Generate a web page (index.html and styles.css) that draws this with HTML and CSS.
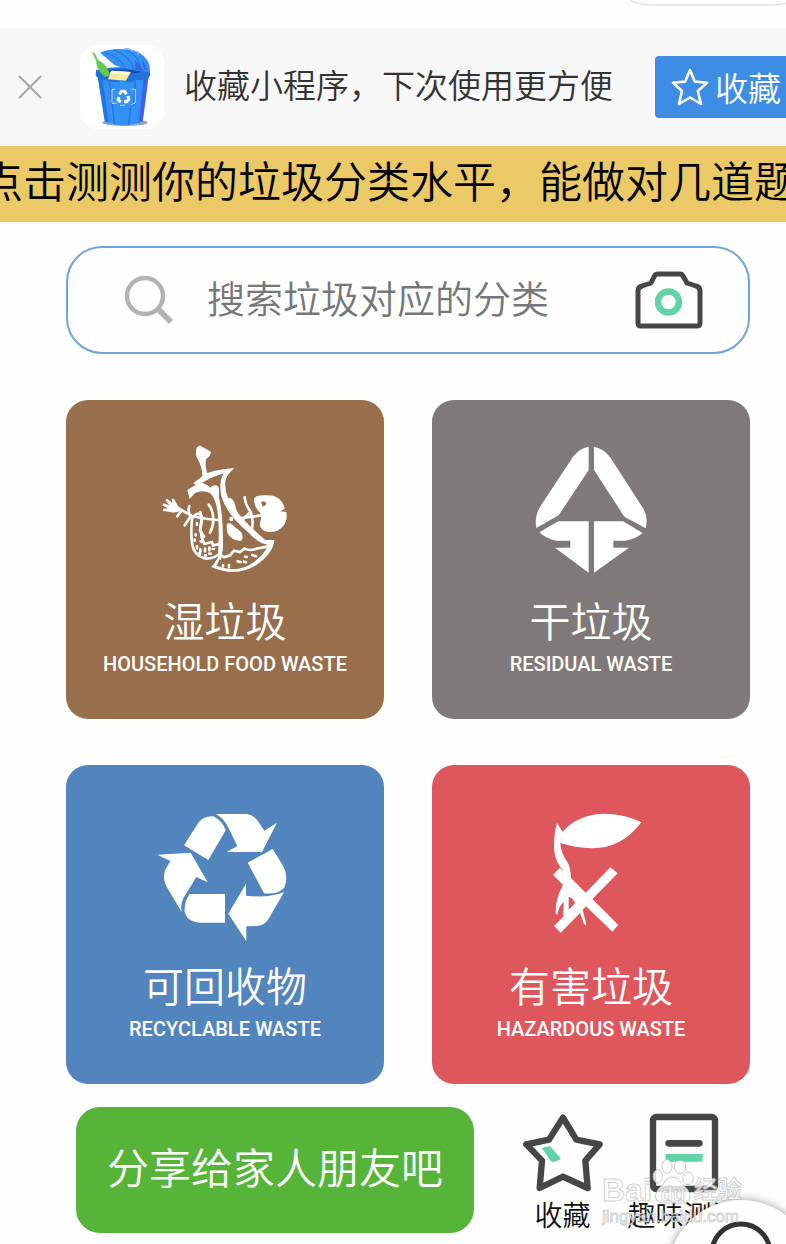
FILE: index.html
```html
<!DOCTYPE html>
<html lang="zh-CN">
<head>
<meta charset="utf-8">
<meta name="viewport" content="width=device-width, initial-scale=1">
<title>垃圾分类</title>
<link rel="stylesheet" href="styles.css">
</head>
<body>
<div class="page">
  <header class="topbar"><div class="capsule"></div></header>

  <section class="tip">
    <button class="tip-close" type="button" aria-label="关闭">
      <svg width="26" height="26" viewBox="0 0 26 26"><path d="M2 2L24 24M24 2L2 24" stroke="#a9a9a9" stroke-width="2.4" fill="none"/></svg>
    </button>
    <div class="app-icon">
      <svg width="84" height="84" viewBox="30 17 252 252">
        <ellipse cx="165" cy="250" rx="68" ry="10" fill="#8fa3c4"/>
        <path d="M82 108L104 246Q160 270 218 246L236 108Z" fill="#3590f5"/>
        <path d="M222 110L206 251L218 246L236 108Z" fill="#3b62ea"/>
        <path d="M84 114L105 246L116 250L98 120Z" fill="#2277dc"/>
        <path d="M118 126L134 255M182 205L176 257M196 120L190 200" stroke="#2274d9" stroke-width="4" fill="none"/>
        <path d="M78 92Q160 74 240 92L240 110Q226 124 200 122Q180 134 156 124Q130 134 108 122Q84 122 77 108Z" fill="#2272db"/>
        <path d="M92 96Q160 84 226 96Q160 112 92 96Z" fill="#194fa8"/>
        <path d="M90 40Q120 26 168 30Q216 34 234 66Q242 84 238 98Q190 98 134 78Q112 58 90 40Z" fill="#3391f4"/>
        <path d="M104 40Q146 50 166 86M130 32Q180 46 192 92M172 32Q208 52 214 94" stroke="#2270d2" stroke-width="3" fill="none"/>
        <path d="M196 62L222 96L196 92ZM216 60L234 92L222 90Z" fill="#3266e5"/>
        <path d="M162 30Q174 24 186 34L204 38L204 48" stroke="#6db7f9" stroke-width="4" fill="none"/>
        <path d="M66 38L74 42L84 62Q106 72 116 94L120 108L106 113Q90 102 82 84Q78 76 79 66Z" fill="#66c94b"/>
        <path d="M124 94L182 98L168 124L114 120Z" fill="#f5e9a0"/>
        <path d="M124 94L182 98L177 107L120 103Z" fill="#fff9cf"/>
        <path d="M136 150H126V192H140M184 150H196V190L184 195M150 198H166" stroke="#b6dcff" stroke-width="3" fill="none"/>
        <g fill="none" stroke="#fff" stroke-width="9"><path d="M148 165L155 156H164L169 165M174 170L176 181L170 187H162M153 188L144 182L147 173"/></g>
      </svg>
    </div>
    <p class="tip-text">收藏小程序，下次使用更方便</p>
    <button class="tip-fav" type="button">
      <svg width="40" height="40" viewBox="0 0 40 40"><path d="M20 3L24.8 14.6L37 15.8L27.8 24L31 37L20 30.5L9 37L12 24L3 15.8L15.2 14.6Z" fill="none" stroke="#fff" stroke-width="2.6" stroke-linejoin="round"/></svg>
      <span>收藏</span>
    </button>
  </section>

  <a class="banner" href="#quiz">点击测测你的垃圾分类水平，能做对几道题</a>

  <main class="content">
    <form class="search">
      <svg class="search-icon" width="50" height="50" viewBox="0 0 50 50"><circle cx="21" cy="21" r="18" fill="none" stroke="#b3b3b3" stroke-width="4.5"/><path d="M34 34L47 47" stroke="#b3b3b3" stroke-width="6"/></svg>
      <input class="search-input" type="search" placeholder="搜索垃圾对应的分类" aria-label="搜索垃圾对应的分类">
      <button class="camera" type="button" aria-label="拍照识别">
        <svg width="68" height="60" viewBox="0 0 68 60"><path d="M3 21Q3 17 7 16L16 13L20 5Q21 4 23 4H45Q47 4 48 6L52 13L61 16Q65 17 65 21V53Q65 56 62 56H6Q3 56 3 53Z" fill="none" stroke="#464646" stroke-width="5" stroke-linejoin="round"/><circle cx="33.500" cy="32" r="10.500" fill="none" stroke="#63d3a6" stroke-width="6.500"/></svg>
      </button>
    </form>

    <nav class="cards">
      <a class="card card-wet" href="#wet">
        <svg class="card-icon" viewBox="0 0 450 480">
          <g fill="#fff">
            <path d="M157 138Q158 112 140 82Q132 50 150 47Q165 54 183 66Q179 82 168 88Q164 112 174 134Z"/>
            <path d="M130 159Q151 145 164 133Q195 118 253 114Q230 134 226 154Q222 196 256 238Q282 276 346 330L373 330Q370 370 318 406Q258 444 184 411Q196 399 201 386L210 386L200 407Q262 431 306 400Q342 376 355 344Q326 342 296 308Q230 254 214 198Q206 158 220 131Q190 136 140 168Z"/>
            <path d="M112 180L152 156Q194 172 208 206Q220 262 219 354L213 390L203 388Q208 330 205 270Q202 212 181 190Q158 178 135 189L119 207Z"/>
            <path d="M184 169Q204 160 207 177V204Q194 196 184 176Z"/>
            <path d="M236 203Q250 205 254 220L262 250Q240 232 236 203Z"/>
            <path d="M230 285Q234 274 244 282L273 306Q283 320 273 333Q242 332 231 306Z"/>
            <ellipse cx="244" cy="267" rx="6" ry="7"/>
            <path fill-rule="evenodd" d="M312 206C320 192 350 196 370 197C390 204 402 218 404 237L390 244L409 246C414 276 400 292 382 302C360 310 336 306 330 288C326 274 340 264 330 248C320 238 312 226 312 206ZM333 216L338 230L347 226L349 218L342 214Z"/>
            <path d="M92 240Q78 252 58 245L39 243L40 236L54 235L37 226L40 220L58 226L46 210L52 206L67 220L65 206L72 207L82 224Z"/>
          </g>
          <g fill="none" stroke="#fff" stroke-width="8" stroke-linecap="round">
            <path d="M78 231L126 258Q170 268 206 270M270 265Q305 260 335 256"/>
            <path d="M118 228Q112 246 122 259L104 286M94 242L82 259M176 224Q190 242 190 270Q190 290 180 308M151 246Q158 270 150 300L162 320"/>
            <path d="M284 202Q286 224 302 246L272 274M302 246Q312 272 305 300"/>
            <path d="M126 268Q122 300 126 340Q132 378 168 386Q196 386 212 368"/>
            <path d="M126 265Q146 238 157 264L151 292L155 322L163 342L186 336L189 346L208 342"/>
            <path d="M212 375L222 382L240 376L252 362L270 366L284 356Q300 364 318 356L350 350L365 334"/>
            <path d="M141 279V285M137 313V316M134 329V332M156 336L152 334M141 349V355M151 358V365M165 356V364M178 353V361M188 357H192M165 376H168M178 371H182M147 370L150 372M219 405V409M237 405V412M263 394L272 396M286 380L290 381M282 395L288 397M307 375L318 379"/>
          </g>
        </svg>
        <span class="card-title">湿垃圾</span>
        <span class="card-sub">HOUSEHOLD FOOD WASTE</span>
      </a>
      <a class="card card-dry" href="#dry">
        <svg class="card-icon" viewBox="-12 0 450 480">
          <path fill="#fff" d="M206 50V120L116 256L49 294Q43 263 58 234L158 82Q178 54 206 50ZM222 50Q252 56 272 84L371 238Q385 262 377 295L313 260L222 120ZM115 274H206V428L105 353H151V332H108Q77 326 58 307ZM222 274H309L368 309Q346 328 315 332H280V353H327L222 428Z"/>
        </svg>
        <span class="card-title">干垃圾</span>
        <span class="card-sub">RESIDUAL WASTE</span>
      </a>
      <a class="card card-recycle" href="#recycle">
        <svg class="card-icon" viewBox="0 -12 450 480">
          <path fill="#fff" d="M102 139L146 70Q162 50 190 52Q218 66 227 94L175 183ZM198 45H292Q314 50 326 70L343 95L381 71L336 159H230L262 141L234 84Q222 58 198 45ZM293 191L368 150L400 202Q416 234 403 266Q384 287 342 283ZM402 280L354 362Q342 380 320 381L289 382V427L235 344L288 254V290Q355 298 402 280ZM119 285H225V371H150Q112 369 104 340Q101 310 119 285ZM22 167L122 161L173 250L139 234L101 296Q90 314 95 339L54 270Q36 244 45 214L61 186Z"/>
        </svg>
        <span class="card-title">可回收物</span>
        <span class="card-sub">RECYCLABLE WASTE</span>
      </a>
      <a class="card card-harm" href="#harm">
        <svg class="card-icon" viewBox="-12 -12 450 480">
          <path fill="#fff" d="M111 72L128 98Q174 45 255 44Q320 46 364 70Q306 148 216 148Q163 146 121 132Q122 162 143 190Q152 208 153 237L197 281L271 205L293 223L217 300L295 378L277 398L198 322L188 332L199 375Q196 381 192 374L180 342L122 401L102 381L130 353L131 309Q118 319 112 347L107 344Q105 300 129 258L99 227L119 207L133 218Q103 190 102 145Q102 102 111 72ZM146 294V332L165 313Q158 294 146 294Z"/>
        </svg>
        <span class="card-title">有害垃圾</span>
        <span class="card-sub">HAZARDOUS WASTE</span>
      </a>
    </nav>

    <footer class="actions">
      <button class="share" type="button">分享给家人朋友吧</button>
      <a class="action" href="#favorites">
        <svg width="80" height="80" viewBox="0 0 240 240"><path d="M120 14L160 80L230 94L187 143L194 225L120 191L50 225L57 143L10 94L78 80Z" fill="none" stroke="#464646" stroke-width="19" stroke-linejoin="round"/><path d="M57 106Q62 101 82 100L114 138L92 148L83 144Z" fill="#5fd3a5"/></svg>
        <span>收藏</span>
      </a>
      <a class="action" href="#quiz">
        <svg width="80" height="80" viewBox="0 0 240 240"><rect x="27" y="12" width="186" height="216" rx="10" fill="none" stroke="#464646" stroke-width="19"/><path d="M74 91H166" stroke="#464646" stroke-width="20" stroke-linecap="round"/><path d="M65 123H176V140Q176 146 170 146H65Z" fill="#5fd3a5"/></svg>
        <span>趣味测试</span>
      </a>
    </footer>
  </main>

  <button class="service" type="button" aria-label="客服">
    <svg width="146" height="146" viewBox="0 0 146 146"><circle cx="73" cy="53" r="29" fill="none" stroke="#333" stroke-width="5"/></svg>
  </button>

  <div class="watermark">
    <div class="wm-brand">
      <span>Bai</span>
      <span class="wm-paw">
        <svg width="42" height="46" viewBox="0 0 126 138"><g fill="#fff" fill-opacity=".8" stroke="#b5b5b5" stroke-opacity=".7" stroke-width="3"><ellipse cx="17" cy="52" rx="14" ry="20"/><ellipse cx="45" cy="22" rx="15" ry="21"/><ellipse cx="84" cy="24" rx="17" ry="20"/><ellipse cx="108" cy="58" rx="16" ry="19"/><path d="M61 54Q78 54 88 74Q114 92 114 112Q110 134 84 132H36Q10 132 10 110Q14 90 34 76Q42 54 61 54Z"/></g></svg>
        <b>du</b>
      </span>
      <span class="wm-cn">经验</span>
    </div>
    <div class="wm-url">jingyan.baidu.com</div>
  </div>
</div>
</body>
</html>
```
FILE: styles.css
```css
* { box-sizing: border-box; }
body {
  margin: 0;
  background: #fefefe;
  font-family: Roboto, "Noto Sans CJK SC", sans-serif;
  font-weight: 350;
  color: #222;
}
button {
  border: 0;
  padding: 0;
  background: none;
  font: inherit;
  color: inherit;
}
a { color: inherit; text-decoration: none; }
svg { display: block; flex: none; }
.page {
  position: relative;
  overflow: hidden;
  min-height: 100vh;
}
.topbar {
  display: flex;
  justify-content: flex-end;
  align-items: flex-start;
  height: 28px;
}
.capsule {
  width: 164px;
  height: 6px;
  margin-right: -8px;
  border: 2px solid #e6e6e6;
  border-top: 0;
  border-radius: 0 0 28px 28px / 0 0 6px 6px;
}
.tip {
  display: flex;
  align-items: center;
  height: 118px;
  padding-left: 17px;
  background: #f7f7f7;
}
.app-icon {
  flex: none;
  margin: 0 20px 0 37px;
  border-radius: 18px;
  background: #fff;
  overflow: hidden;
}
.tip-text {
  flex: 1;
  margin: 0;
  padding-bottom: 6px;
  font-family: "Noto Sans CJK SC", sans-serif;
  font-size: 33px;
  line-height: 40px;
  white-space: nowrap;
  color: #333;
}
.tip-fav {
  display: flex;
  align-items: center;
  gap: 5px;
  height: 62px;
  padding: 0 5px 0 15px;
  border-radius: 4px 0 0 4px;
  background: #3e8de4;
  color: #fff;
  font-size: 33px;
  white-space: nowrap;
}
.banner {
  display: block;
  height: 76px;
  background: #ebc966;
  color: #000;
  font-family: "Noto Sans CJK SC", sans-serif;
  font-size: 43px;
  line-height: 66px;
  white-space: nowrap;
  text-indent: -20px;
  overflow: hidden;
}
.content { padding: 24px 36px 10px 66px; }
.search {
  display: flex;
  align-items: center;
  height: 108px;
  padding: 0 45px 0 56px;
  border: 2px solid #6fa5dd;
  border-radius: 36px;
}
.search-input {
  flex: 1;
  min-width: 0;
  margin-left: 33px;
  padding: 0;
  border: 0;
  outline: 0;
  background: none;
  font: inherit;
  font-size: 38px;
  line-height: 56px;
}
.search-input::placeholder { color: #777; opacity: 1; }
.cards {
  display: grid;
  grid-template-columns: 1fr 1fr;
  gap: 46px 48px;
  margin-top: 46px;
}
.card {
  display: flex;
  flex-direction: column;
  align-items: center;
  padding: 30px 0 43px;
  border-radius: 22px;
  color: #fff;
}
.card-wet { background: #986e4c; }
.card-dry { background: #7f7a79; }
.card-recycle { background: #5284be; }
.card-harm { background: #dd575c; }
.card-icon { width: 150px; height: 160px; }
.card-title {
  margin-top: 9px;
  font-size: 41px;
  line-height: 48px;
}
.card-sub {
  margin-top: 5px;
  font-size: 20px;
  font-weight: 500;
  line-height: 24px;
  white-space: nowrap;
}
.actions {
  display: flex;
  align-items: flex-start;
  margin-top: 23px;
  padding-left: 10px;
}
.share {
  width: 398px;
  height: 126px;
  margin-right: 28px;
  padding-bottom: 10px;
  border-radius: 24px;
  background: #56b538;
  color: #fff;
  font-size: 42px;
  white-space: nowrap;
}
.action {
  display: flex;
  flex-direction: column;
  align-items: center;
  width: 121px;
  padding-top: 6px;
  font-size: 28px;
  line-height: 40px;
  white-space: nowrap;
  color: #111;
}
.action svg { margin-bottom: 4px; }
.service {
  position: absolute;
  right: -28px;
  bottom: -99px;
  border-radius: 50%;
  background: #fefefe;
  box-shadow: 0 0 10px rgba(0, 0, 0, .4);
}
.watermark {
  position: absolute;
  right: 42px;
  bottom: 18px;
  width: 142px;
  color: rgba(255, 255, 255, .8);
  font-family: "Liberation Sans", "Noto Sans CJK SC", sans-serif;
  font-weight: 700;
  -webkit-text-stroke: 1px rgba(165, 165, 165, .5);
}
.wm-brand {
  display: flex;
  align-items: flex-end;
  font-size: 32px;
  line-height: 30px;
}
.wm-paw { position: relative; }
.wm-paw b {
  position: absolute;
  left: 9px;
  bottom: 0;
  font-size: 20px;
  line-height: 22px;
}
.wm-cn { font-size: 24px; }
.wm-url {
  font-size: 17px;
  font-weight: 400;
  line-height: 24px;
}
```
